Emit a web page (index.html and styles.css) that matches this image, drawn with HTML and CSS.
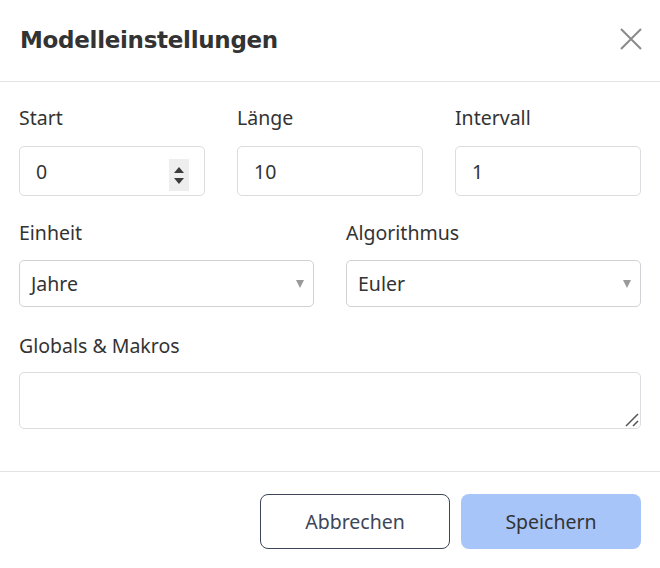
FILE: index.html
```html
<!DOCTYPE html>
<html lang="de">
<head>
<meta charset="utf-8">
<title>Modelleinstellungen</title>
<link rel="stylesheet" href="styles.css">
</head>
<body>
<div class="dialog">
  <header class="header">
    <h1 class="title">Modelleinstellungen</h1>
    <button class="close" aria-label="Schließen">
      <svg width="22" height="22" viewBox="0 0 22 22"><path d="M1 1 L21 21 M21 1 L1 21" stroke="#8a8a8a" stroke-width="2" fill="none"/></svg>
    </button>
  </header>
  <main class="body">
    <div class="row three">
      <div class="group">
        <label class="label">Start</label>
        <div class="field">
          <span class="value">0</span>
          <span class="spinner"><span class="up"></span><span class="down"></span></span>
        </div>
      </div>
      <div class="group">
        <label class="label">Länge</label>
        <div class="field"><span class="value">10</span></div>
      </div>
      <div class="group">
        <label class="label">Intervall</label>
        <div class="field"><span class="value">1</span></div>
      </div>
    </div>
    <div class="row two">
      <div class="group">
        <label class="label">Einheit</label>
        <div class="select"><span class="value">Jahre</span><span class="arrow"></span></div>
      </div>
      <div class="group">
        <label class="label">Algorithmus</label>
        <div class="select"><span class="value">Euler</span><span class="arrow"></span></div>
      </div>
    </div>
    <div class="group textgroup">
      <label class="label">Globals &amp; Makros</label>
      <div class="textwrap">
        <textarea class="textarea"></textarea>
        <svg class="grip" width="16" height="16" viewBox="0 0 16 16"><path d="M3 15 L15 3 M10 15 L15 10" stroke="#555" stroke-width="1.5" fill="none"/></svg>
      </div>
    </div>
  </main>
  <footer class="footer">
    <button class="btn btn-cancel">Abbrechen</button>
    <button class="btn btn-save">Speichern</button>
  </footer>
</div>
</body>
</html>
```
FILE: styles.css
```css
* { box-sizing: border-box; }
html, body { margin: 0; padding: 0; background: #fff; }
body { font-family: "Noto Sans", "Open Sans", sans-serif; color: #333; }

.dialog { width: 660px; height: 568px; display: flex; flex-direction: column; }

.header {
  height: 82px;
  border-bottom: 1px solid #e3e3e3;
  display: flex;
  align-items: center;
  justify-content: space-between;
  padding: 0 18px 2px 20px;
}
.title {
  margin: 0;
  font-family: "DejaVu Sans", sans-serif;
  font-weight: bold;
  font-size: 23px;
  letter-spacing: -0.3px;
  color: #333;
}
.close {
  border: 0; background: none; padding: 0; width: 22px; height: 22px;
  display: flex; align-items: center; justify-content: center; margin-top: -2px;
}

.body { padding: 24px 19px 0 19px; flex: 1; }
.row { display: grid; column-gap: 32px; }
.three { grid-template-columns: 186px 186px 186px; margin-bottom: 25px; }
.two { grid-template-columns: 295px 295px; margin-bottom: 27px; }

.group { display: flex; flex-direction: column; }
.label { font-size: 19.5px; line-height: 24px; color: #333; padding-left: 0; }
.three .label { margin-bottom: 16px; }
.two .label { margin-bottom: 15px; }
.textgroup .label { margin-bottom: 14px; }

.field, .select {
  border: 1px solid #dcdce0;
  border-radius: 5px;
  display: flex;
  align-items: center;
  font-size: 19.5px;
  color: #333;
}
.field { height: 50px; padding: 0 16px 0 16px; }
.select { height: 47px; padding: 0 9px 0 11px; justify-content: space-between; border-color: #d2d2d6; }
.value { flex: 1; }

.spinner {
  width: 20px; height: 32px; background: #eeeeee;
  display: flex; flex-direction: column; align-items: center; justify-content: center; gap: 5px;
  margin-right: -1px; margin-top: 8px;
}
.up { width: 0; height: 0; border-left: 5px solid transparent; border-right: 5px solid transparent; border-bottom: 6px solid #3c3c3c; }
.down { width: 0; height: 0; border-left: 5px solid transparent; border-right: 5px solid transparent; border-top: 6px solid #3c3c3c; }

.arrow { width: 0; height: 0; border-left: 4px solid transparent; border-right: 4px solid transparent; border-top: 8px solid #9a9a9a; }

.textwrap { position: relative; height: 57px; }
.textarea {
  display: block;
  height: 57px; width: 100%;
  border: 1px solid #dcdce0; border-radius: 5px;
  font-family: inherit; font-size: 18px; resize: none; outline: none;
}
.grip { position: absolute; right: 2px; bottom: 2px; }

.footer {
  border-top: 1px solid #e3e3e3;
  height: 97px;
  display: flex;
  justify-content: flex-end;
  align-items: flex-start;
  gap: 11px;
  padding: 22px 19px 0 0;
}
.btn {
  height: 55px; border-radius: 8px; font-family: inherit; font-size: 19.5px; color: #333;
}
.btn-cancel { width: 190px; background: #fff; border: 1px solid #3d4658; color: #3d4658; }
.btn-save { width: 180px; background: #a8c5f9; border: 0; }
```
